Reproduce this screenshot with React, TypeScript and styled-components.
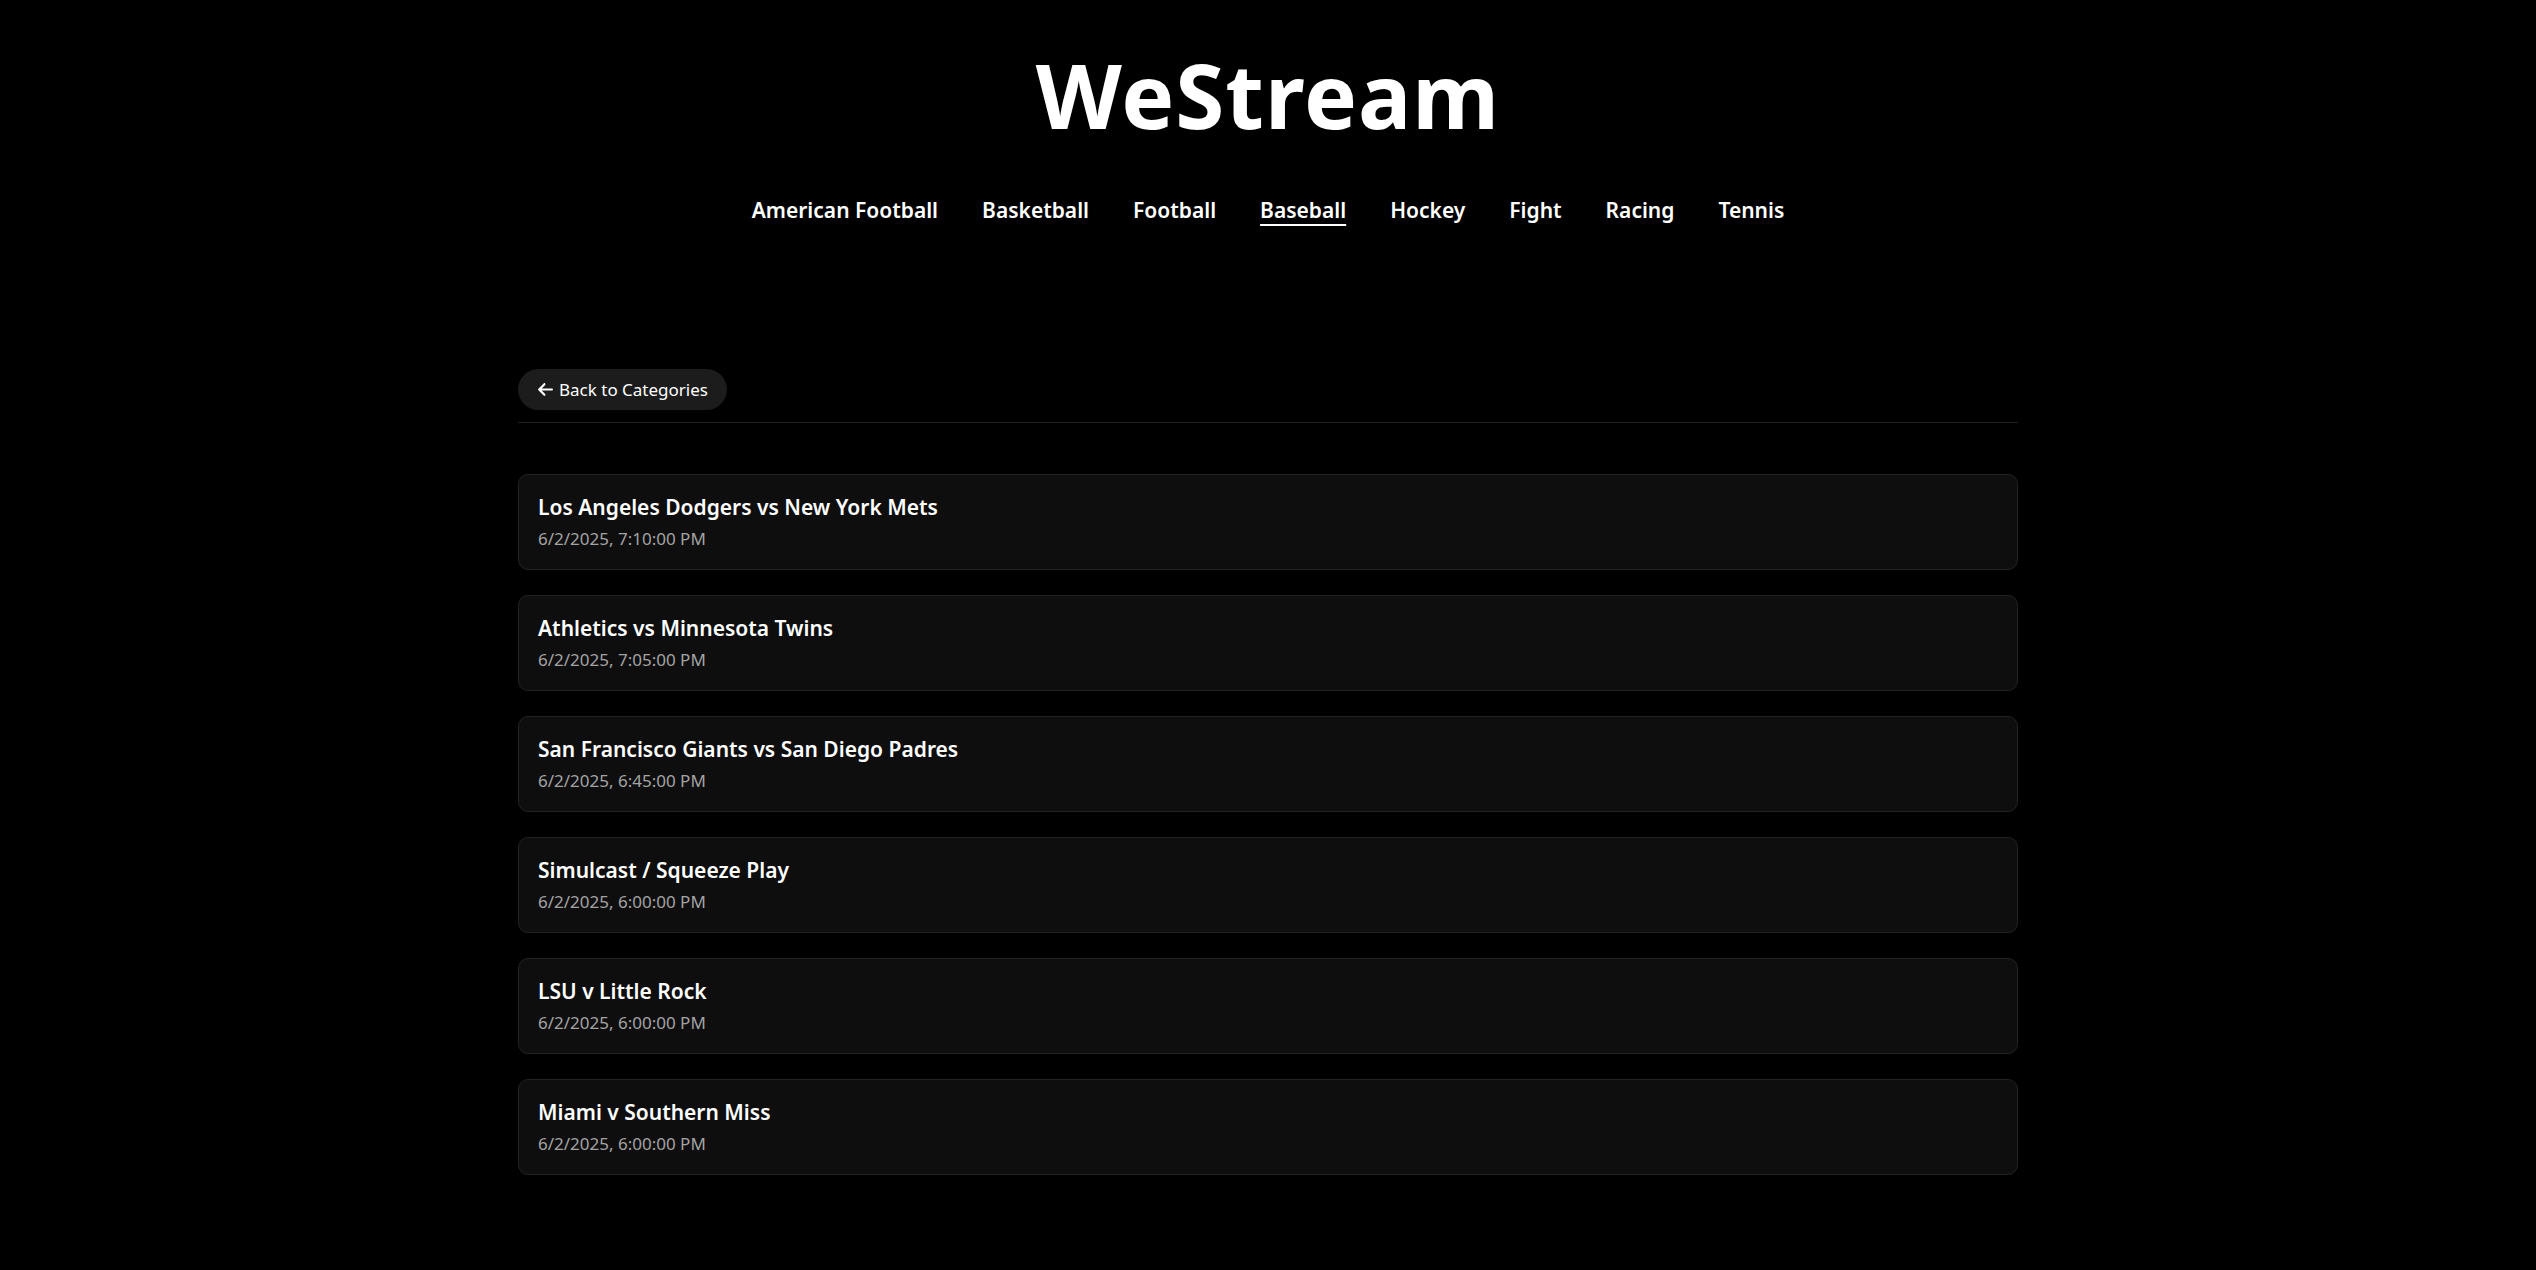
import React from 'react';
import styled, { createGlobalStyle } from 'styled-components';

const GlobalStyle = createGlobalStyle`
    html, body {
        margin: 0;
        padding: 0;
        background-color: #000;
        color: #fff;
        font-family: 'Noto Sans', 'Open Sans', sans-serif;
    }
`;

const Header = styled.header`
    display: flex;
    flex-direction: column;
    align-items: center;
    padding-top: 42px;
`;

const Logo = styled.h1`
    margin: 0;
    font-size: 89px;
    font-weight: 700;
    line-height: 1.2;
    letter-spacing: 1px;
`;

const Nav = styled.nav`
    display: flex;
    gap: 44px;
    margin-top: 47px;
`;

const NavLink = styled.a<{ $active?: boolean }>`
    color: #fff;
    font-size: 21px;
    font-weight: 600;
    text-decoration: ${(p) => (p.$active ? 'underline' : 'none')};
    text-underline-offset: 6px;
    text-decoration-thickness: 2px;
    cursor: pointer;
`;

const Main = styled.main`
    width: 1500px;
    margin: 145px auto 0;
`;

const Toolbar = styled.div`
    padding-bottom: 12px;
    border-bottom: 1px solid #1f1f1f;
`;

const BackButton = styled.button`
    display: inline-flex;
    align-items: center;
    gap: 5px;
    height: 41px;
    padding: 0 19px;
    border: none;
    border-radius: 999px;
    background-color: #1c1c1c;
    color: #fff;
    font-family: inherit;
    font-size: 17px;
    cursor: pointer;
`;

const List = styled.div`
    display: flex;
    flex-direction: column;
    gap: 25px;
    margin-top: 51px;
    padding-bottom: 60px;
`;

const Card = styled.div`
    height: 96px;
    box-sizing: border-box;
    padding: 0 19px;
    display: flex;
    flex-direction: column;
    justify-content: center;
    gap: 6px;
    background-color: #0e0e0e;
    border: 1px solid #222;
    border-radius: 10px;
    cursor: pointer;
`;

const Title = styled.div`
    font-size: 21px;
    font-weight: 600;
`;

const Time = styled.div`
    font-size: 17px;
    color: #a3a3a3;
`;

const categories = [
    'American Football',
    'Basketball',
    'Football',
    'Baseball',
    'Hockey',
    'Fight',
    'Racing',
    'Tennis',
];

const matches = [
    { title: 'Los Angeles Dodgers vs New York Mets', time: '6/2/2025, 7:10:00 PM' },
    { title: 'Athletics vs Minnesota Twins', time: '6/2/2025, 7:05:00 PM' },
    { title: 'San Francisco Giants vs San Diego Padres', time: '6/2/2025, 6:45:00 PM' },
    { title: 'Simulcast / Squeeze Play', time: '6/2/2025, 6:00:00 PM' },
    { title: 'LSU v Little Rock', time: '6/2/2025, 6:00:00 PM' },
    { title: 'Miami v Southern Miss', time: '6/2/2025, 6:00:00 PM' },
];

const ArrowLeft = () => (
    <svg width="17" height="17" viewBox="0 0 448 512" fill="currentColor">
        <path d="M9.4 233.4c-12.5 12.5-12.5 32.8 0 45.3l160 160c12.5 12.5 32.8 12.5 45.3 0s12.5-32.8 0-45.3L109.2 288H416c17.7 0 32-14.3 32-32s-14.3-32-32-32H109.3L214.6 118.6c12.5-12.5 12.5-32.8 0-45.3s-32.8-12.5-45.3 0l-160 160z" />
    </svg>
);

const App = () => {
    return (
        <>
            <GlobalStyle />
            <Header>
                <Logo>WeStream</Logo>
                <Nav>
                    {categories.map((c) => (
                        <NavLink key={c} $active={c === 'Baseball'}>
                            {c}
                        </NavLink>
                    ))}
                </Nav>
            </Header>
            <Main>
                <Toolbar>
                    <BackButton>
                        <ArrowLeft />
                        Back to Categories
                    </BackButton>
                </Toolbar>
                <List>
                    {matches.map((m) => (
                        <Card key={m.title}>
                            <Title>{m.title}</Title>
                            <Time>{m.time}</Time>
                        </Card>
                    ))}
                </List>
            </Main>
        </>
    );
};

export default App;
